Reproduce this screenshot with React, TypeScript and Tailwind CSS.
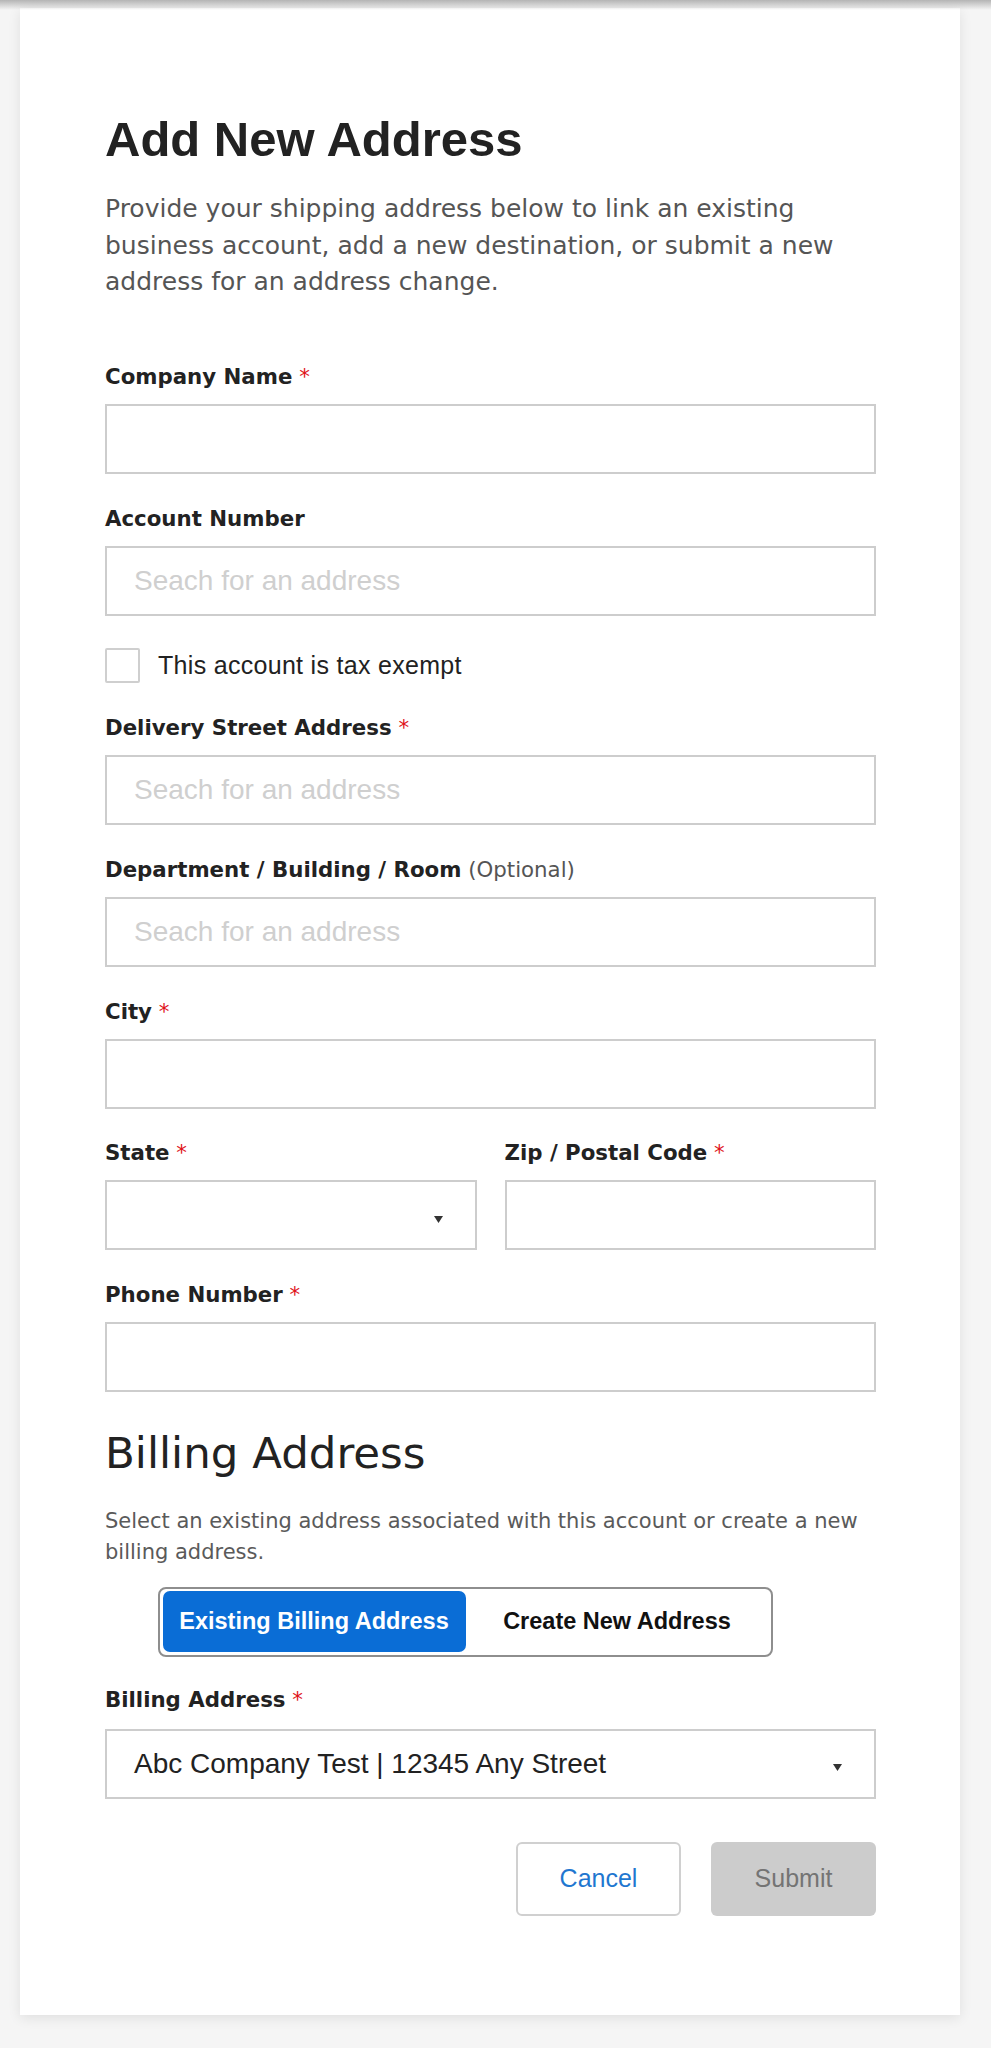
import React from "react";

const DEJA = "font-['DejaVu_Sans',sans-serif]";
const LIB = "font-['Liberation_Sans',Arial,sans-serif]";

function Label({
  text,
  required,
  optional,
}: {
  text: string;
  required?: boolean;
  optional?: boolean;
}) {
  return (
    <div className={`${DEJA} text-[21.3px] leading-[24px] font-bold text-[#222] whitespace-nowrap`}>
      {text}
      {required && <span className="font-normal text-[#e0131a]"> *</span>}
      {optional && <span className="font-normal text-[#555]"> (Optional)</span>}
    </div>
  );
}

function Arrow() {
  return (
    <svg width="9" height="7" viewBox="0 0 9 7" className="mt-[8px] shrink-0">
      <path d="M0 0 H9 L4.5 7 Z" fill="#333" />
    </svg>
  );
}

function TextInput({ placeholder }: { placeholder?: string }) {
  return (
    <input
      type="text"
      placeholder={placeholder}
      className={`${LIB} mt-[15px] block w-full h-[70px] border-2 border-[#cdcdcd] bg-white pl-[27px] text-[28px] text-[#222] placeholder:text-[#cfcfcf] outline-none`}
    />
  );
}

function SelectBox({ value, mt = "mt-[15px]" }: { value?: string; mt?: string }) {
  return (
    <div
      className={`${LIB} ${mt} flex items-center justify-between w-full h-[70px] border-2 border-[#cdcdcd] bg-white pl-[27px] pr-[32px] text-[28px] text-[#222]`}
    >
      <span className="whitespace-nowrap">{value ?? ""}</span>
      <Arrow />
    </div>
  );
}

function Field({
  label,
  required,
  optional,
  placeholder,
}: {
  label: string;
  required?: boolean;
  optional?: boolean;
  placeholder?: string;
}) {
  return (
    <div>
      <Label text={label} required={required} optional={optional} />
      <TextInput placeholder={placeholder} />
    </div>
  );
}

export default function App() {
  return (
    <div className="relative min-h-[2048px] bg-[#f5f5f5] pt-[8px] pb-[30px]">
      <div className="absolute top-0 left-0 right-0 h-[10px] bg-linear-to-b from-[#b4b4b4] to-transparent z-10" />
      <div className="ml-[20px] w-[940px] bg-white shadow-[0_3px_12px_rgba(0,0,0,0.09)] pt-[107px] pb-[99px] pl-[85px] pr-[84px]">
        <h1 className={`${LIB} text-[49px] leading-[49px] font-bold text-[#222]`}>
          Add New Address
        </h1>
        <p className={`${DEJA} mt-[27px] text-[25px] leading-[36.7px] text-[#555]`}>
          Provide your shipping address below to link an existing business account, add a new
          destination, or submit a new address for an address change.
        </p>

        <div className="mt-[64px] flex flex-col gap-[32.7px]">
          <Field label="Company Name" required />
          <Field label="Account Number" placeholder="Seach for an address" />
          <label className="flex items-center h-[35px]">
            <span className="block w-[35px] h-[35px] border-2 border-[#cfcfcf] rounded-[2px] bg-white shrink-0" />
            <span className={`${LIB} ml-[18px] text-[25px] leading-[35px] tracking-[0.3px] text-[#222]`}>
              This account is tax exempt
            </span>
          </label>
          <Field label="Delivery Street Address" required placeholder="Seach for an address" />
          <Field label="Department / Building / Room" optional placeholder="Seach for an address" />
          <Field label="City" required />
          <div className="grid grid-cols-2 gap-x-[28px]">
            <div>
              <Label text="State" required />
              <SelectBox />
            </div>
            <div>
              <Label text="Zip / Postal Code" required />
              <TextInput />
            </div>
          </div>
          <Field label="Phone Number" required />
        </div>

        <h2 className={`${DEJA} mt-[40px] text-[43.5px] leading-[42px] text-[#222]`}>
          Billing Address
        </h2>
        <p className={`${DEJA} mt-[32px] text-[21px] leading-[31px] text-[#5a5a5a]`}>
          Select an existing address associated with this account or create a new billing address.
        </p>

        <div className="mt-[19px] ml-[53px] w-[615px] h-[70px] border-2 border-[#8e8e8e] rounded-[8px] p-[2.5px] grid grid-cols-2">
          <div className={`${LIB} flex items-center justify-center bg-[#0a6dd6] rounded-[7px] text-white text-[23.5px] font-bold`}>
            Existing Billing Address
          </div>
          <div className={`${LIB} flex items-center justify-center text-[#111] text-[23.5px] font-bold`}>
            Create New Address
          </div>
        </div>

        <div className="mt-[30.6px]">
          <Label text="Billing Address" required />
          <SelectBox value="Abc Company Test | 12345 Any Street" mt="mt-[17px]" />
        </div>

        <div className="mt-[43.7px] flex justify-end gap-[30px]">
          <button
            type="button"
            className={`${LIB} w-[165px] h-[74px] rounded-[6px] border-2 border-[#d0d0d0] bg-white text-[25px] text-[#1f77d0]`}
          >
            Cancel
          </button>
          <button
            type="button"
            className={`${LIB} w-[165px] h-[74px] rounded-[6px] bg-[#cccccc] text-[25px] text-[#747474]`}
          >
            Submit
          </button>
        </div>
      </div>
    </div>
  );
}
